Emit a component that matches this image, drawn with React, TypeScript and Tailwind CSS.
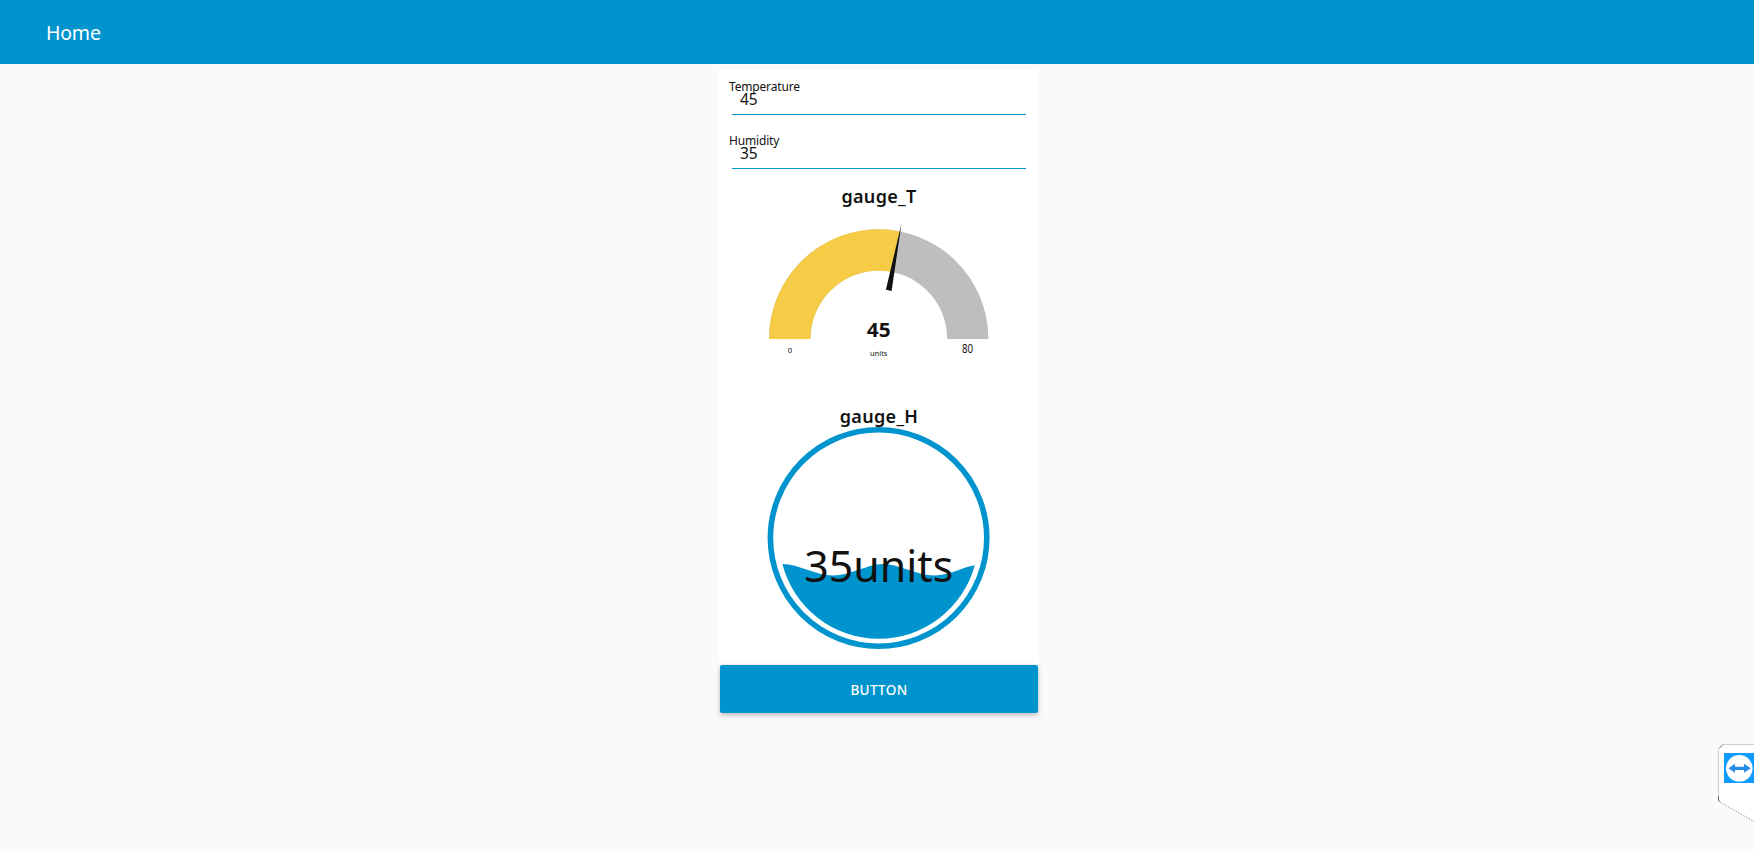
import React from "react";

function Field({ label, value }: { label: string; value: string }) {
  return (
    <div className="h-[54px] pt-[9px]">
      <div className="h-[11px] pl-[10px] text-[12px] leading-4 tracking-[-0.17px]">{label}</div>
      <div className="ml-[13px] h-[25px] w-[294px] border-b border-[#0094ce] pl-2 text-[15.5px] leading-[18px]">
        {value}
      </div>
    </div>
  );
}

function TemperatureGauge() {
  return (
    <svg className="block h-[194px] w-[320px]" viewBox="0 0 320 194" fill="#111">
      <path d="M50 130A109.7 109.7 0 0 1 269.4 130H228.2A68.3 68.3 0 0 0 91.4 130Z" fill="#bebebe" />
      <path d="M50 130A109.7 109.7 0 0 1 181.1 22.4L173 63A68.3 68.3 0 0 0 91.4 130Z" fill="#f6cb46" />
      <path d="M182.6 14L172.6 82L166.9 80.7Z" />
      <text x="147.8" y="128.2" fontSize="19.8" fontWeight="700" textLength="23.8" lengthAdjust="spacingAndGlyphs">45</text>
      <text x="68.8" y="143.6" fontSize="6.8" textLength="4.4" lengthAdjust="spacingAndGlyphs">0</text>
      <text x="151" y="146.8" fontSize="7.5" textLength="17.4" lengthAdjust="spacingAndGlyphs">units</text>
      <text x="243" y="144.4" fontSize="11.8" textLength="11.2" lengthAdjust="spacingAndGlyphs">80</text>
    </svg>
  );
}

function HumidityGauge() {
  return (
    <svg className="-mt-[3px] block h-[239px] w-[320px]" viewBox="0 0 320 239">
      <circle cx="159.6" cy="112" r="108.2" fill="none" stroke="#0094ce" strokeWidth="5.6" />
      <path
        d="M63.4 138C80 138 96 149.5 114 149.5S148 138 164 138S198 149.5 215 149.5S243 141 255.8 139.3A99.5 99.5 0 0 1 63.4 138Z"
        fill="#0094ce"
      />
      <text x="85.3" y="156.2" fontSize="43.8" fill="#111" textLength="149" lengthAdjust="spacingAndGlyphs">35units</text>
    </svg>
  );
}

function SideTab() {
  return (
    <svg className="absolute right-0 top-[743px] h-[80px] w-[37px]" viewBox="0 0 37 80">
      <path d="M37 1.5H5.5L1.5 5.5V57L7 61L37 78Z" fill="#fff" />
      <path d="M37 1.5H6M1.5 6V54" fill="none" stroke="#c9ced6" />
      <path d="M2 5.5L6 1.5M1.5 53V57.5L3 58.5" fill="none" stroke="#666" />
      <path d="M3 59L37 78.5" fill="none" stroke="#999" strokeDasharray="1.5 1.5" />
      <rect x="7" y="10" width="30" height="30" fill="#0c9cff" />
      <circle cx="22.3" cy="25.3" r="13.3" fill="#fff" />
      <path d="M11.5 25.3L18 20.8V23.7H27V20.8L33.8 25.3L27 29.8V27H18V29.8Z" fill="#278bea" />
    </svg>
  );
}

export default function App() {
  return (
    <div className="relative h-[852px] w-full overflow-hidden bg-[#fafafa] font-['Noto_Sans',sans-serif] text-[#111]">
      <header className="flex h-16 items-center bg-[#0094ce] pl-[46px] pt-0.5 text-[19.5px] tracking-[-0.2px] text-white">
        <h1>Home</h1>
      </header>
      <main className="ml-[719px] mt-[6px] w-[320px]">
        <section className="h-[594px] bg-white">
          <Field label="Temperature" value="45" />
          <Field label="Humidity" value="35" />
          <h2 className="mt-[5px] h-[26px] text-center text-[18px] font-semibold leading-[26px] tracking-[0.3px]">gauge_T</h2>
          <TemperatureGauge />
          <h2 className="h-[26px] text-center text-[18px] font-semibold leading-[26px] tracking-[0.3px]">gauge_H</h2>
          <HumidityGauge />
        </section>
        <button className="mx-px mt-px block h-12 w-[318px] rounded-[2px] bg-[#0094ce] pt-0.5 text-[13.5px] font-medium tracking-[0.35px] text-white shadow-[0_2px_5px_rgba(0,0,0,0.26)]">
          BUTTON
        </button>
      </main>
      <SideTab />
    </div>
  );
}
